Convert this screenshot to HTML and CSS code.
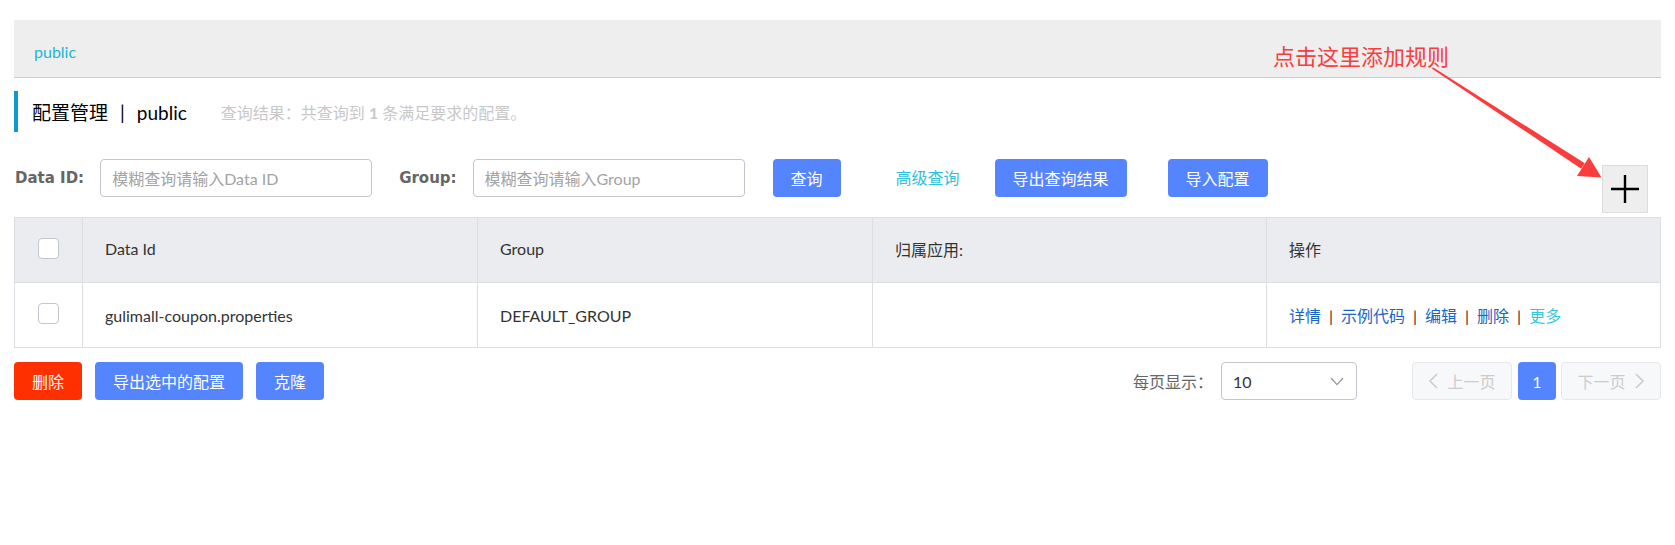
FILE: index.html
```html
<!DOCTYPE html>
<html lang="zh-CN">
<head>
<meta charset="utf-8">
<title>配置管理</title>
<link rel="stylesheet" href="styles.css">
</head>
<body>
<div class="page">
  <div class="ns-bar"><span class="ns-item">public</span></div>

  <div class="title-bar">
    <span class="title">配置管理<span class="title-sep">|</span>public</span>
    <span class="summary">查询结果：共查询到 <strong>1</strong> 条满足要求的配置。</span>
  </div>

  <div class="search-row">
    <label class="field-label">Data ID:</label>
    <input class="field-input" type="text" placeholder="模糊查询请输入Data ID">
    <label class="field-label group-label">Group:</label>
    <input class="field-input" type="text" placeholder="模糊查询请输入Group">
    <button class="btn btn-primary query-btn">查询</button>
    <a class="adv-link">高级查询</a>
    <button class="btn btn-primary export-btn">导出查询结果</button>
    <button class="btn btn-primary import-btn">导入配置</button>
    <button class="add-btn" aria-label="add">
      <svg width="28" height="28" viewBox="0 0 28 28"><path d="M0 14H28M14 0V28" stroke="#000" stroke-width="2.4" fill="none"/></svg>
    </button>
  </div>

  <table class="config-table">
    <thead>
      <tr>
        <th class="c-check"><span class="checkbox"></span></th>
        <th class="c-col">Data Id</th>
        <th class="c-col">Group</th>
        <th class="c-app">归属应用:</th>
        <th>操作</th>
      </tr>
    </thead>
    <tbody>
      <tr>
        <td class="c-check"><span class="checkbox"></span></td>
        <td>gulimall-coupon.properties</td>
        <td>DEFAULT_GROUP</td>
        <td></td>
        <td class="actions"><a class="act">详情</a><span class="sep">|</span><a class="act">示例代码</a><span class="sep">|</span><a class="act">编辑</a><span class="sep">|</span><a class="act">删除</a><span class="sep">|</span><a class="act more">更多</a></td>
      </tr>
    </tbody>
  </table>

  <div class="footer-row">
    <div class="batch">
      <button class="btn btn-danger">删除</button>
      <button class="btn btn-primary">导出选中的配置</button>
      <button class="btn btn-primary">克隆</button>
    </div>
    <div class="paging">
      <span class="size-label">每页显示：</span>
      <div class="size-select">
        <span>10</span>
        <svg width="14" height="9" viewBox="0 0 14 9"><polyline points="1,1 7,7.6 13,1" fill="none" stroke="#999" stroke-width="1.3"/></svg>
      </div>
      <button class="pg-btn pg-prev"><svg width="10" height="16" viewBox="0 0 10 16"><polyline points="9,1 2,8 9,15" fill="none" stroke="#ccc" stroke-width="1.6"/></svg>上一页</button>
      <button class="pg-num">1</button>
      <button class="pg-btn pg-next">下一页<svg width="10" height="16" viewBox="0 0 10 16"><polyline points="1,1 8,8 1,15" fill="none" stroke="#ccc" stroke-width="1.6"/></svg></button>
    </div>
  </div>

  <div class="annotation">点击这里添加规则</div>
  <svg class="arrow" viewBox="1420 55 190 130" width="190" height="130">
    <polygon points="1432.1,68.7 1432.9,67.3 1584.8,163.3 1581.2,168.7" fill="#fa3c3c"/>
    <polygon points="1589,157 1601.5,177.5 1577,176" fill="#fa3c3c"/>
  </svg>
</div>
</body>
</html>
```

FILE: styles.css
```css
* {
  box-sizing: border-box;
}

body {
  margin: 0;
  background: #fff;
  color: #333;
  font-family: Lato, "Noto Sans CJK SC", sans-serif;
  font-size: 16px;
}

.page {
  position: relative;
  padding: 20px 14px 0;
}

/* namespace bar */
.ns-bar {
  height: 58px;
  background: #eeeeee;
  border-bottom: 1px solid #cccccc;
  display: flex;
  align-items: center;
  padding: 6px 0 0 20px;
}

.ns-item {
  color: #22b6d6;
  font-size: 16px;
}

/* title */
.title-bar {
  margin-top: 13px;
  height: 41px;
  border-left: 4px solid #0b9bd1;
  display: flex;
  align-items: center;
  padding-left: 14px;
}

.title {
  font-size: 19px;
  color: #000;
}

.title-sep {
  margin: 0 12px;
}

.summary {
  margin-left: 34px;
  color: #c8c8c8;
  font-size: 16px;
}

.summary strong {
  font-weight: 700;
}

/* search row */
.search-row {
  margin-top: 27px;
  display: flex;
  align-items: flex-start;
}

.field-label {
  font-family: "DejaVu Sans", sans-serif;
  font-weight: bold;
  font-size: 15px;
  color: #666;
  line-height: 38px;
  margin-right: 16px;
  padding-left: 1px;
}

.group-label {
  margin-left: 26px;
}

.field-input {
  width: 272px;
  height: 38px;
  border: 1px solid #c4c6cf;
  border-radius: 4px;
  padding: 0 11px;
  font-family: Lato, "Noto Sans CJK SC", sans-serif;
  font-size: 16px;
  color: #333;
  outline: none;
}

.field-input::placeholder {
  color: #a3a3a3;
}

.btn {
  height: 38px;
  padding: 0 18px;
  border: 0;
  border-radius: 4px;
  font-family: Lato, "Noto Sans CJK SC", sans-serif;
  font-size: 16px;
  color: #fff;
  cursor: pointer;
  white-space: nowrap;
}

.btn-primary {
  background: #5584ff;
}

.btn-danger {
  background: #ff3000;
}

.query-btn {
  margin-left: 28px;
}

.adv-link {
  margin-left: 55px;
  line-height: 38px;
  color: #33c1dc;
  cursor: pointer;
}

.export-btn {
  margin-left: 35px;
}

.import-btn {
  margin-left: 41px;
}

.add-btn {
  margin: 6px 13px 0 auto;
  width: 46px;
  height: 48px;
  padding: 0;
  background: #eeeeee;
  border: 1px solid #dddddd;
  display: flex;
  align-items: center;
  justify-content: center;
}

/* table */
.config-table {
  width: 100%;
  margin-top: 4px;
  border-collapse: separate;
  border-spacing: 0;
  border-top: 1px solid #dcdee3;
  border-left: 1px solid #dcdee3;
  table-layout: fixed;
}

.config-table th,
.config-table td {
  height: 65px;
  padding: 0 0 0 22px;
  border-right: 1px solid #dcdee3;
  border-bottom: 1px solid #dcdee3;
  text-align: left;
  font-weight: normal;
  vertical-align: middle;
  color: #333;
  font-size: 16px;
  white-space: nowrap;
}

.config-table th {
  background: #ebecf0;
  padding-bottom: 3px;
}

.config-table .c-check {
  width: 68px;
  padding: 0;
}

.config-table .c-col {
  width: 395px;
}

.config-table .c-app {
  width: 394px;
}

.checkbox {
  display: block;
  width: 21px;
  height: 21px;
  margin: -4px auto 0;
  background: #fff;
  border: 1px solid #c4c6cf;
  border-radius: 4px;
}

.act {
  color: #1a64c6;
  cursor: pointer;
}

.act.more {
  color: #33c7e2;
}

.sep {
  margin: 0 8px;
  color: #3a2f2a;
}

/* footer */
.footer-row {
  margin-top: 14px;
  display: flex;
  align-items: center;
}

.batch {
  display: flex;
  gap: 13px;
}

.paging {
  margin-left: auto;
  display: flex;
  align-items: center;
}

.size-label {
  color: #666;
  margin-right: 8px;
}

.size-select {
  width: 136px;
  height: 38px;
  border: 1px solid #c4c6cf;
  border-radius: 4px;
  display: flex;
  align-items: center;
  justify-content: space-between;
  padding: 0 12px 0 11px;
  color: #333;
}

.pg-btn,
.pg-num {
  height: 38px;
  border-radius: 4px;
  font-family: Lato, "Noto Sans CJK SC", sans-serif;
  font-size: 16px;
  display: flex;
  align-items: center;
  justify-content: center;
  padding: 0;
}

.pg-btn {
  width: 100px;
  gap: 9px;
  background: #f7f8fa;
  border: 1px solid #e6e7eb;
  color: #cccccc;
}

.pg-prev {
  margin-left: 55px;
}

.pg-num {
  width: 38px;
  margin: 0 5px 0 6px;
  background: #5584ff;
  border: 0;
  color: #fff;
}

/* annotation overlay */
.annotation {
  position: absolute;
  left: 1273px;
  top: 46px;
  font-size: 22px;
  line-height: 22px;
  color: #fa3c3c;
  white-space: nowrap;
}

.arrow {
  position: absolute;
  left: 1420px;
  top: 55px;
}
```
